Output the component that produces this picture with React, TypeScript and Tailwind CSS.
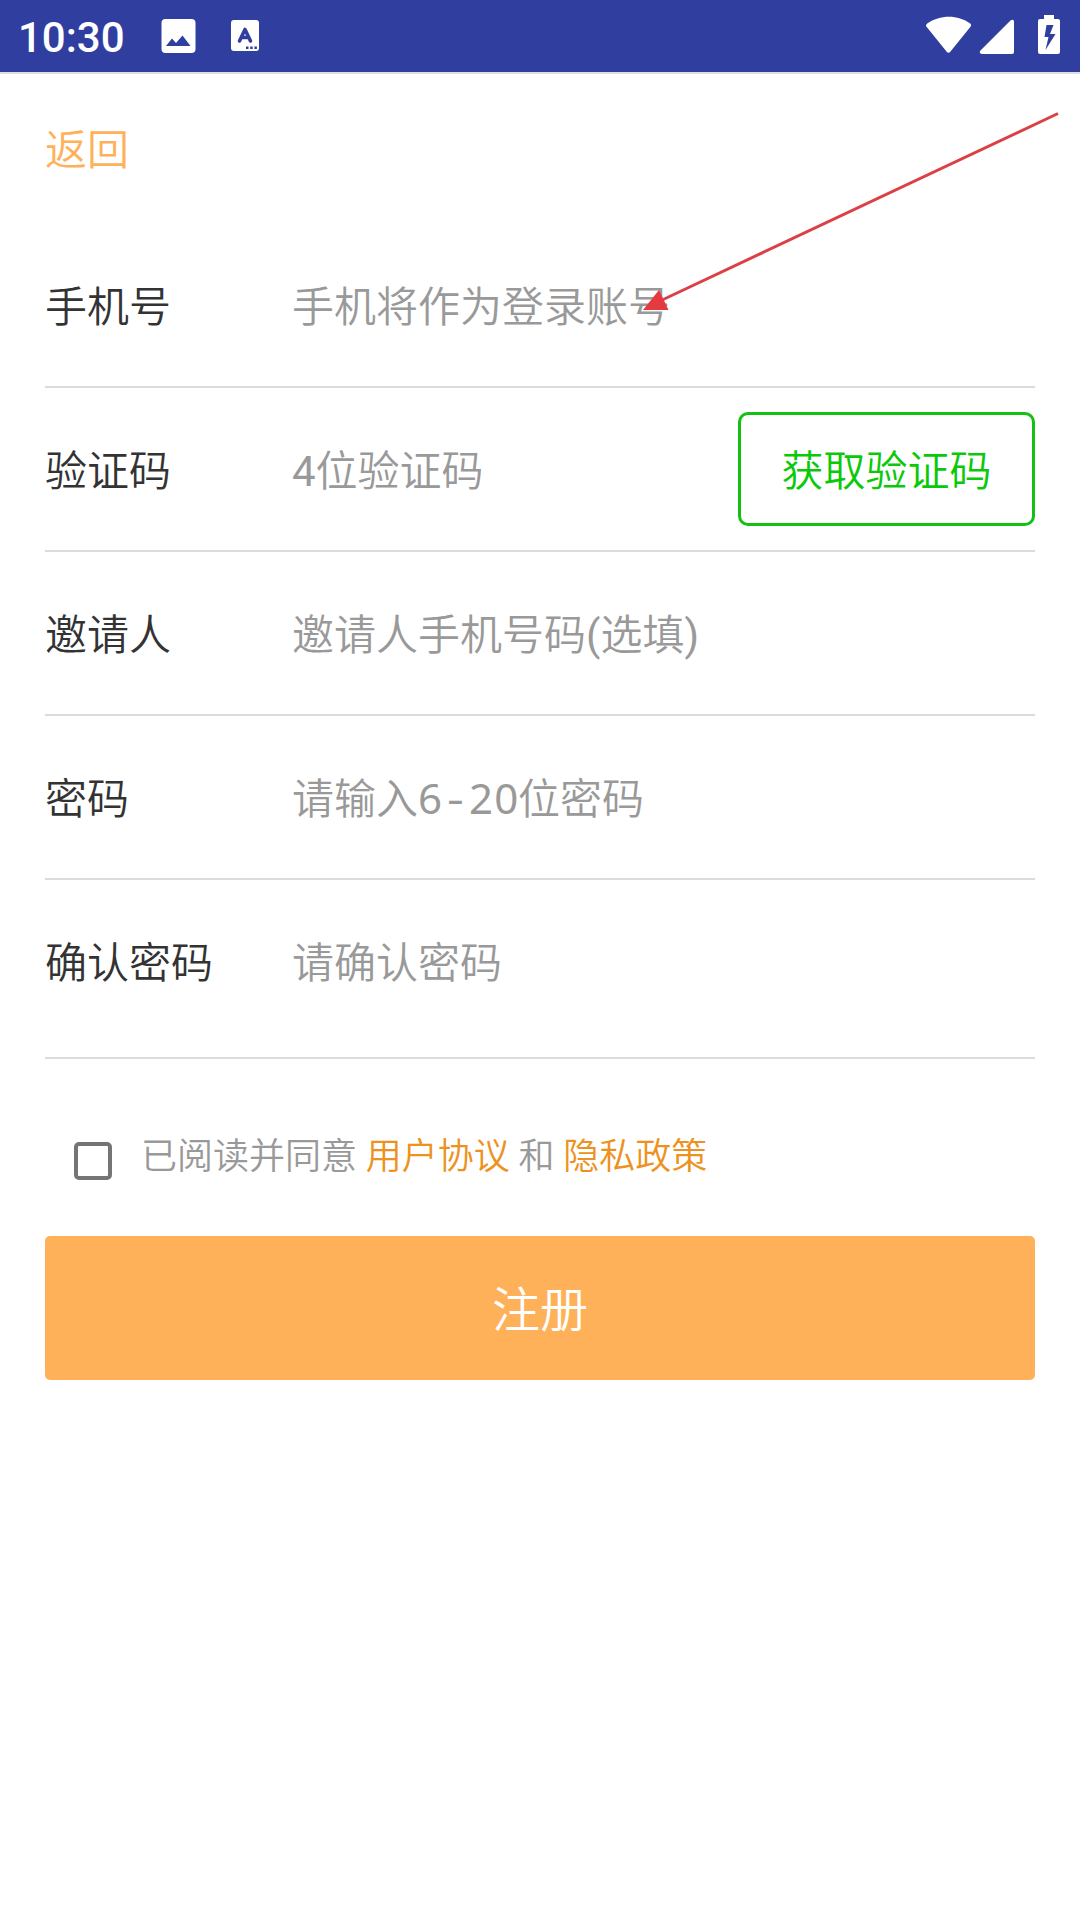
import React, { useState } from 'react';

type FieldProps = {
  label: string;
  type?: string;
  placeholder?: string;
  hint?: React.ReactNode;
  className?: string;
  children?: React.ReactNode;
};

const Field: React.FC<FieldProps> = ({ label, type = 'text', placeholder, hint, className = 'h-[164px]', children }) => (
  <div className={`flex items-start border-b-2 border-[#dcdcdc] ${className}`}>
    <label className="flex h-[162px] w-[247px] shrink-0 items-center pt-[5px] text-[42px] text-[#333]">{label}</label>
    <div className="relative flex h-[162px] min-w-0 flex-1 items-center">
      <input
        type={type}
        placeholder={placeholder}
        className="h-full w-full bg-transparent pt-[5px] text-[42px] text-[#333] outline-none placeholder:text-[#999] placeholder:opacity-100"
      />
      {hint && (
        <div className="pointer-events-none absolute inset-0 flex items-center pt-[5px] text-[42px] text-[#999]">
          {hint}
        </div>
      )}
    </div>
    {children}
  </div>
);

const StatusBar = () => (
  <div className="flex h-[74px] items-center border-b-2 border-[#dedede] bg-[#303f9f] pl-[18px] text-white">
    <span className="w-[143px] pt-[3px] font-[Roboto] text-[42px] leading-none font-medium">10:30</span>
    <svg className="h-[36px] w-[36px]" viewBox="0 0 36 36">
      <rect x="0.5" y="1" width="34" height="34" rx="4" fill="#fff" />
      <path d="M5 28L11 20.5L15 25L21.5 17.5L29.500 28Z" fill="#303f9f" />
    </svg>
    <svg className="ml-[34px] h-[36px] w-[28px]" viewBox="0 0 28 36">
      <rect x="0" y="2" width="28" height="31" rx="3" fill="#fff" />
      <path d="M8.500 23L14 11.500L19.500 23M10.500 19.500H17.500" stroke="#303f9f" strokeWidth="3.600" strokeLinecap="round" strokeLinejoin="round" fill="none" />
      <path d="M15 28.500h2.500v2.500H15zM19.200 28.500h2.500v2.500h-2.500zM23.400 28.500h2.500v2.500h-2.500z" fill="#303f9f" />
    </svg>
    <svg className="ml-auto h-[72px] w-[154px]" viewBox="0 0 154 72">
      <path d="M1.200 23.500C14 14.500 32 14.500 44.200 23.500Q45.800 25 44.500 26.800L24.500 51.500Q22.500 54 20.500 51.500L0.500 26.800Q-0.700 25 1.200 23.500Z" fill="#fff" />
      <path d="M54.500 50.500L84.500 20.500Q87 18.800 88 21V52Q88 54 86 54H56Q52.500 53.500 54.500 50.500Z" fill="#fff" />
      <path fillRule="evenodd" d="M118 15h10v4h4q2 0 2 2v31q0 2-2 2h-18q-2 0-2-2V21q0-2 2-2h4zM120.500 25L118.500 37H122.500L119.500 50L129.500 34H124L127.500 25Z" fill="#fff" />
    </svg>
  </div>
);

const RegisterPage: React.FC = () => {
  const [agreed, setAgreed] = useState(false);

  return (
    <div className="relative min-h-[1920px] w-[1080px] bg-white font-['Roboto','Noto_Sans_CJK_SC',sans-serif] font-[350]">
      <StatusBar />
      <div className="flex h-[150px] px-[45px] pt-[45px]">
        <a className="text-[42px] leading-[63px] text-[#ffb159]">返回</a>
      </div>
      <form className="px-[45px]">
        <Field label="手机号" placeholder="手机将作为登录账号" />
        <Field
          label="验证码"
          hint={
            <p>
              <span className="font-normal">4</span>位验证码
            </p>
          }
        >
          <button
            type="button"
            className="mt-[24px] h-[114px] w-[297px] rounded-[10px] border-[3px] border-[#13c113] pt-[5px] text-[42px] text-[#09c909]"
          >
            获取验证码
          </button>
        </Field>
        <Field
          label="邀请人"
          hint={
            <p>
              邀请人手机号码<span className="font-normal">(</span>选填<span className="font-normal">)</span>
            </p>
          }
        />
        <Field
          label="密码"
          type="password"
          hint={
            <p className="flex items-baseline">
              <span>请输入</span>
              <span className="font-['Noto_Sans'] leading-none font-normal">6</span>
              <span className="w-[27px] scale-x-125 text-center font-['Noto_Sans'] leading-none font-normal">-</span>
              <span className="w-[49px] font-['Noto_Sans'] leading-none font-normal tracking-[1.2px]">20</span>
              <span>位密码</span>
            </p>
          }
        />
        <Field label="确认密码" type="password" placeholder="请确认密码" className="h-[179px]" />

        <div className="flex h-[177px] items-start pl-[29px] text-[36px]">
          <button
            type="button"
            role="checkbox"
            aria-checked={agreed}
            aria-label="已阅读并同意"
            onClick={() => setAgreed(!agreed)}
            className={`mt-[83px] mr-[29px] size-[38px] rounded-[5px] border-4 border-[#757575] ${agreed ? 'bg-[#757575]' : ''}`}
          />
          <p className="mt-[71px] leading-[54px] text-[#999]">
            已阅读并同意 <a className="text-[#ed9220]">用户协议</a> 和 <a className="text-[#ed9220]">隐私政策</a>
          </p>
        </div>

        <button type="button" className="h-[144px] w-full rounded-[5px] bg-[#ffb159] pt-[5px] text-[48px] text-white">
          注册
        </button>
      </form>

      <svg className="pointer-events-none absolute top-[100px] left-[630px] h-[220px] w-[440px]" viewBox="630 100 440 220">
        <path d="M1058 113.500L660 301" stroke="#db4046" strokeWidth="3" fill="none" />
        <path d="M643 310L659 290L668.500 310Z" fill="#e33b40" />
      </svg>
    </div>
  );
};

export default RegisterPage;
